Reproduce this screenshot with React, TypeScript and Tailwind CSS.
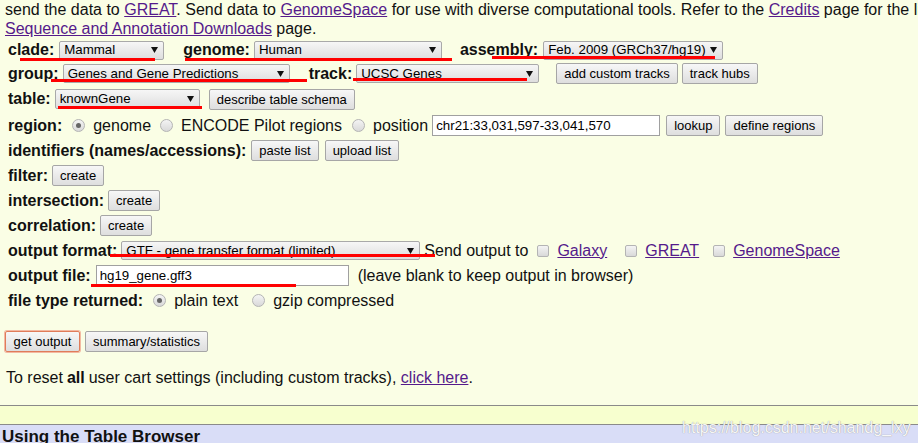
// Table Browser form — UCSC style, with red annotation marks over the picture.

const link = 'text-[#551a8b] underline';

function Arrow() {
  return (
    <svg width="7" height="6" viewBox="0 0 7 6" className="shrink-0">
      <polygon points="0,0 7,0 3.5,6" fill="#111" />
    </svg>
  );
}

function Select({ value, className }: { value: string; className: string }) {
  return (
    <div
      className={`flex items-center justify-between border border-[#a9a9a9] rounded-[2px] bg-gradient-to-b from-[#f6f6f6] to-[#dedede] pl-[4px] pr-[5px] text-[13.3px] leading-none text-black whitespace-nowrap overflow-hidden ${className}`}
    >
      <span>{value}</span>
      <Arrow />
    </div>
  );
}

function Btn({ children, className = '' }: { children: string; className?: string }) {
  return (
    <button
      className={`h-[21px] px-[7px] border border-[#a6a6a6] rounded-[2px] bg-gradient-to-b from-[#f7f7f7] to-[#dedede] text-[13px] leading-none text-black whitespace-nowrap ${className}`}
    >
      {children}
    </button>
  );
}

function Radio({ checked = false, className = '' }: { checked?: boolean; className?: string }) {
  return (
    <span
      className={`w-[13px] h-[13px] rounded-full border border-[#b4b4b4] bg-gradient-to-b from-[#f4f4f4] to-[#d9d9d9] flex items-center justify-center shrink-0 ${className}`}
    >
      {checked && <span className="w-[5px] h-[5px] rounded-full bg-[#666]" />}
    </span>
  );
}

function Check({ className = '' }: { className?: string }) {
  return (
    <span
      className={`w-[12px] h-[12px] rounded-[2px] border border-[#b4b4b4] bg-gradient-to-b from-[#f4f4f4] to-[#d9d9d9] shrink-0 ${className}`}
    />
  );
}

function Input({ value, className }: { value: string; className: string }) {
  return (
    <div
      className={`h-[21px] border border-[#a0a0a0] bg-white pl-[3px] flex items-center text-[13.3px] leading-none text-black whitespace-nowrap ${className}`}
    >
      {value}
    </div>
  );
}

const Label = ({ children }: { children: string }) => (
  <span className="font-bold text-[16px] whitespace-nowrap">{children}</span>
);

export default function App() {
  return (
    <div
      className="relative w-[918px] h-[443px] overflow-hidden bg-[#fafee5] text-[#111] text-[16px]"
      style={{ fontFamily: '"Liberation Sans", Arial, sans-serif' }}
    >
      <div className="pl-[5px] leading-[19px] whitespace-nowrap">
        <div>
          send the data to <span className={link}>GREAT</span>. Send data to{' '}
          <span className={link}>GenomeSpace</span> for use with diverse computational tools. Refer to
          the <span className={link}>Credits</span> page for the list of contributors and usage
          restrictions
        </div>
        <div>
          <span className={link}>Sequence and Annotation Downloads</span> page.
        </div>
      </div>

      <div className="pl-[8px]">
        <div className="h-[24px] flex items-center">
          <Label>clade:</Label>
          <Select value="Mammal" className="ml-[5px] w-[105px] h-[19px]" />
          <span className="ml-[19px]"><Label>genome:</Label></span>
          <Select value="Human" className="ml-[4px] w-[188px] h-[19px]" />
          <span className="ml-[18px]"><Label>assembly:</Label></span>
          <Select value="Feb. 2009 (GRCh37/hg19)" className="ml-[5px] w-[180px] h-[19px]" />
        </div>

        <div className="h-[23px] flex items-center">
          <Label>group:</Label>
          <Select value="Genes and Gene Predictions" className="ml-[4px] w-[227px] h-[19px]" />
          <span className="ml-[19px]"><Label>track:</Label></span>
          <Select value="UCSC Genes" className="ml-[4px] w-[183px] h-[19px]" />
          <Btn className="ml-[17px]">add custom tracks</Btn>
          <Btn className="ml-[4px]">track hubs</Btn>
        </div>

        <div className="h-[28px] flex items-center">
          <Label>table:</Label>
          <Select value="knownGene" className="ml-[4px] w-[145px] h-[20px]" />
          <Btn className="ml-[9px] h-[20px]">describe table schema</Btn>
        </div>

        <div className="h-[25px] flex items-center">
          <Label>region:</Label>
          <Radio checked className="ml-[10px]" />
          <span className="ml-[8px]">genome</span>
          <Radio className="ml-[9px]" />
          <span className="ml-[8px]">ENCODE Pilot regions</span>
          <Radio className="ml-[10px]" />
          <span className="ml-[8px]">position</span>
          <Input value="chr21:33,031,597-33,041,570" className="ml-[4px] w-[228px]" />
          <Btn className="ml-[6px]">lookup</Btn>
          <Btn className="ml-[5px]">define regions</Btn>
        </div>

        <div className="h-[25px] flex items-center">
          <Label>identifiers (names/accessions):</Label>
          <Btn className="ml-[5px]">paste list</Btn>
          <Btn className="ml-[6px]">upload list</Btn>
        </div>

        <div className="h-[25px] flex items-center">
          <Label>filter:</Label>
          <Btn className="ml-[4px]">create</Btn>
        </div>

        <div className="h-[25px] flex items-center">
          <Label>intersection:</Label>
          <Btn className="ml-[4px]">create</Btn>
        </div>

        <div className="h-[25px] flex items-center">
          <Label>correlation:</Label>
          <Btn className="ml-[4px]">create</Btn>
        </div>

        <div className="h-[25px] flex items-center whitespace-nowrap">
          <Label>output format:</Label>
          <Select value="GTF - gene transfer format (limited)" className="ml-[4px] w-[299px] h-[19px]" />
          <span className="ml-[4px]">Send output to</span>
          <Check className="ml-[9px]" />
          <span className={`ml-[8px] ${link}`}>Galaxy</span>
          <Check className="ml-[18px]" />
          <span className={`ml-[8px] ${link}`}>GREAT</span>
          <Check className="ml-[14px]" />
          <span className={`ml-[8px] ${link}`}>GenomeSpace</span>
        </div>

        <div className="h-[25px] flex items-center whitespace-nowrap">
          <Label>output file:</Label>
          <Input value="hg19_gene.gff3" className="ml-[5px] w-[253px]" />
          <span className="ml-[9px]">(leave blank to keep output in browser)</span>
        </div>

        <div className="h-[25px] flex items-center whitespace-nowrap">
          <Label>file type returned:</Label>
          <Radio checked className="ml-[10px]" />
          <span className="ml-[8px]">plain text</span>
          <Radio className="ml-[14px]" />
          <span className="ml-[8px]">gzip compressed</span>
        </div>
      </div>

      <div className="mt-[16px] h-[25px] pl-[5px] flex items-center">
        <Btn className="w-[75px] border-[#e07c5a] shadow-[0_0_0_1px_#f3b9a2]">get output</Btn>
        <Btn className="ml-[5px]">summary/statistics</Btn>
      </div>

      <div className="mt-[11px] h-[25px] pl-[6px] flex items-center whitespace-nowrap">
        To reset <b className="mx-[4px]">all</b> user cart settings (including custom tracks),&nbsp;
        <span className={link}>click here</span>.
      </div>

      <div className="mt-[15px] border-t border-[#8a8a8a] h-[19px] bg-[#f7ffcf]" />
      <div className="border-t border-[#8a8a8a] bg-[#d9ddf7] h-[30px] pl-[2px] leading-[24px]">
        <span className="font-bold text-[17px]">Using the Table Browser</span>
      </div>

      {/* red annotation marks */}
      <div className="absolute left-[20px] top-[58px] w-[135px] h-[3px] bg-[#ff0000]" />
      <div className="absolute left-[185px] top-[58px] w-[267px] h-[3px] bg-[#ff0000]" />
      <div className="absolute left-[492px] top-[56px] w-[223px] h-[3px] bg-[#ff0000]" />
      <div className="absolute left-[51px] top-[79px] w-[256px] h-[3px] bg-[#ff0000]" />
      <div className="absolute left-[353px] top-[78px] w-[174px] h-[3px] bg-[#ff0000]" />
      <div className="absolute left-[58px] top-[106px] w-[144px] h-[3px] bg-[#ff0000]" />
      <div className="absolute left-[110px] top-[254px] w-[325px] h-[3px] bg-[#ff0000]" />
      <div className="absolute left-[91px] top-[284px] w-[205px] h-[3px] bg-[#ff0000]" />

      {/* watermark */}
      <div className="absolute left-[682px] top-[416px] text-[16px] text-[#f6f6f6] [text-shadow:0_0_1px_#888] whitespace-nowrap">
        https://blog.csdn.net/shandg_lxy
      </div>
    </div>
  );
}
